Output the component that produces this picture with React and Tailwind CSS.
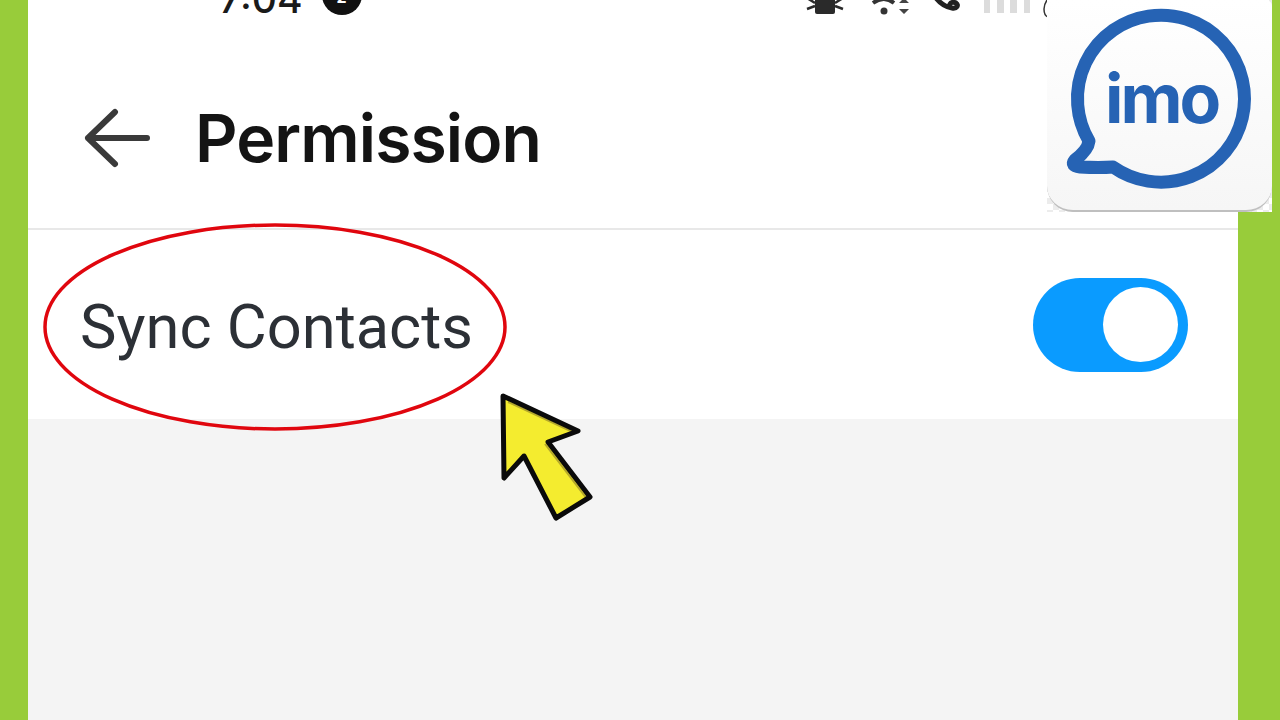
export default function App() {
  return (
    <div className="relative flex h-[720px] w-[1280px] overflow-hidden bg-[#98cc3a] font-['Inter',sans-serif]">
      <main className="ml-[28px] mr-[42px] flex h-full flex-1 flex-col bg-white">
        <div className="flex h-[20px] items-end overflow-hidden pl-[191px]">
          <span className="mb-[2px] text-[39px] leading-none font-medium text-[#1a1a1a]">7:04</span>
          <span className="mb-[5px] ml-[19px] flex h-[40px] w-[40px] shrink-0 items-end justify-center rounded-full bg-[#111] text-[16px] font-bold leading-none text-white">
            <span className="mb-[10px]">2</span>
          </span>
          <svg className="ml-[430px] shrink-0" width="270" height="20" viewBox="790 0 270 20">
            <path d="M813 -4h20v16a2 2 0 0 1-2 2h-16a2 2 0 0 1-2-2z" fill="#2a2a2a" />
            <path d="M805 -2l8 5M805 9l8-3M841 -2l-8 5M841 9l-8-3" stroke="#2a2a2a" strokeWidth="2.5" fill="none" />
            <circle cx="882" cy="11" r="3.5" fill="#333" />
            <path d="M871 3q11-8 21 0" stroke="#333" strokeWidth="4" fill="none" />
            <path d="M897 3l5-5 5 5zM897 9h10l-5 5z" fill="#444" />
            <path d="M934 -2c4 5 10 9 16 10 5 1 7-3 4-5-2-1-5-1-6 1" stroke="#222" strokeWidth="5" fill="none" strokeLinecap="round" />
            <path d="M982 0h6v13h-6zM995 0h7v13h-7zM1008 0h7v13h-7zM1022 0h6v13h-6z" fill="#dcdcdc" />
            <path d="M1045 0c-2 3-3 5-3 9 0 5 1 7 4 8" stroke="#333" strokeWidth="1.5" fill="none" />
          </svg>
        </div>
        <header className="flex h-[210px] items-center border-b-2 border-[#e8e8e8] pl-[56px] pt-[28px]">
          <svg width="68" height="60" viewBox="0 0 68 60" fill="none" stroke="#3a3a3a" strokeWidth="6" strokeLinecap="round" strokeLinejoin="round">
            <path d="M4 30h59M31 4L4 30l27 26" />
          </svg>
          <h1 className="ml-[43px] text-[66px] leading-none font-semibold tracking-[-0.9px] text-[#141414]">Permission</h1>
        </header>
        <section className="flex h-[189px] items-center justify-between pl-[52px] pr-[50px] font-['Roboto',sans-serif]">
          <span className="mt-[6px] text-[61.4px] leading-none text-[#2c3036]">Sync Contacts</span>
          <span className="flex h-[94px] w-[155px] items-center justify-end rounded-full bg-[#0a9bff] pr-[10px]">
            <span className="h-[75px] w-[75px] rounded-full bg-white" />
          </span>
        </section>
        <div className="flex-1 bg-[#f4f4f4]" />
      </main>

      <svg className="pointer-events-none absolute left-[42px] top-[222px]" width="466" height="210" viewBox="0 0 466 210">
        <ellipse cx="233" cy="105" rx="230" ry="102" fill="none" stroke="#e0060e" strokeWidth="3.5" />
      </svg>

      <svg className="pointer-events-none absolute left-[495px] top-[388px]" width="104" height="138" viewBox="495 388 104 138">
        <path d="M503 396L578 431L548 442L590 497L556 518L524 456L504 478Z" fill="#f4ec2f" />
        <path d="M508 402L575 433M545 444L587 499" fill="none" stroke="#b5a92c" strokeWidth="2" />
        <path d="M503 396L578 431L548 442L590 497L556 518L524 456L504 478Z" fill="none" stroke="#0a0a0a" strokeWidth="5" strokeLinejoin="round" />
      </svg>

      <div className="absolute left-[1047px] top-0 h-[212px] w-[225px] bg-[repeating-conic-gradient(#ececec_0_25%,#ffffff_0_50%)] bg-[length:12px_12px]">
        <div className="relative h-full w-full overflow-hidden rounded-b-[26px] rounded-t-[6px] border-b-2 border-[#bfbfbf] bg-gradient-to-b from-white to-[#f6f6f6]">
          <svg className="absolute inset-0" width="225" height="212" viewBox="1047 0 225 212">
            <path d="M1089 141 Q1088 150 1075 160 Q1070 166 1080 167 Q1100 168 1113 167 A83.5 83.5 0 1 0 1089 141Z" fill="none" stroke="#2663b4" strokeWidth="13" strokeLinejoin="round" />
          </svg>
          <span className="absolute left-[58px] top-[64px] text-[68px] leading-none font-bold tracking-[-3px] text-[#2663b4]">imo</span>
        </div>
      </div>
    </div>
  );
}
